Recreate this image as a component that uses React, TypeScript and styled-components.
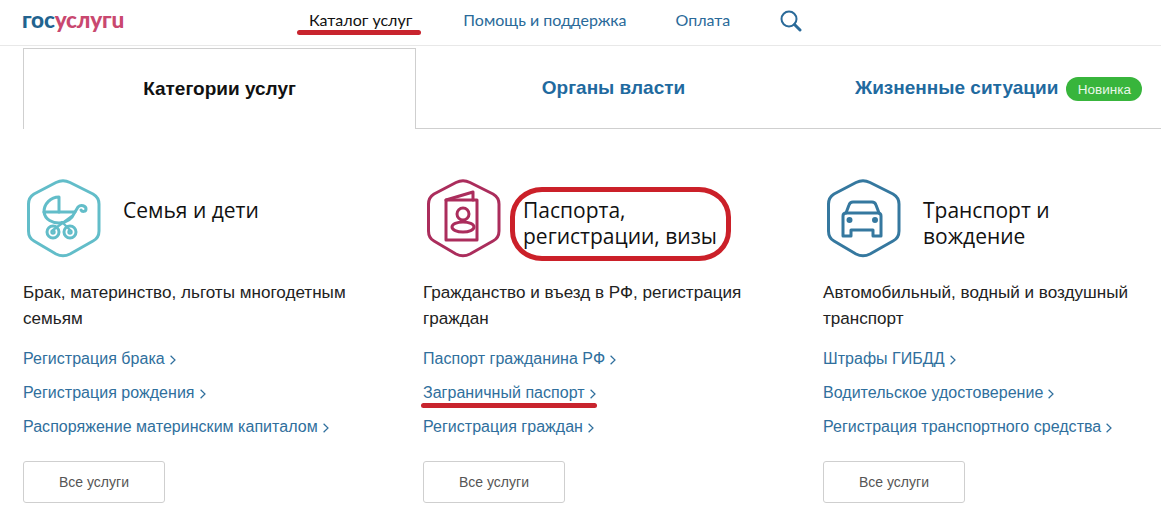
import React from 'react';
import styled, { createGlobalStyle } from 'styled-components';

const GlobalStyle = createGlobalStyle`
  html, body {
    margin: 0;
    padding: 0;
    background: #fff;
  }
  body {
    font-family: "Liberation Sans", Arial, sans-serif;
  }
`;

const Page = styled.div`
  width: 1161px;
  height: 514px;
  overflow: hidden;
  background: #fff;
`;

const Header = styled.header`
  display: flex;
  align-items: center;
  height: 45px;
  padding-left: 22px;
  border-bottom: 1px solid #e8e8e8;
`;

const Logo = styled.div`
  width: 287px;
  font-family: "Lato", sans-serif;
  font-size: 22.6px;
  font-weight: 900;
  letter-spacing: -0.2px;
  line-height: 24px;
  color: #c9486f;
  margin-top: -5px;

  span {
    color: #22638f;
  }
`;

const Nav = styled.nav`
  display: flex;
  align-items: center;
  margin-top: -6px;
`;

const NavLink = styled.a<{ $active?: boolean; $gap: number }>`
  position: relative;
  margin-right: ${(p) => p.$gap}px;
  font-family: "Lato", sans-serif;
  font-size: 16px;
  line-height: 20px;
  color: ${(p) => (p.$active ? '#111' : '#2a6a99')};
  white-space: nowrap;
`;

const RedStroke = styled.i<{ $left: number; $right: number; $bottom: number }>`
  position: absolute;
  left: ${(p) => p.$left}px;
  right: ${(p) => p.$right}px;
  bottom: ${(p) => p.$bottom}px;
  height: 5px;
  border-radius: 3px;
  background: #c8242e;
`;

const SearchIcon = styled.svg`
  display: block;
  width: 22px;
  height: 22px;
  margin-top: 2px;
`;

const Tabs = styled.div`
  display: flex;
  height: 81px;
  margin: 2px 0 0 23px;
`;

const Tab = styled.div<{ $active?: boolean; $width: number; $indent?: number }>`
  display: flex;
  align-items: center;
  justify-content: ${(p) => (p.$indent ? 'flex-start' : 'center')};
  gap: 8px;
  box-sizing: border-box;
  width: ${(p) => p.$width}px;
  height: 81px;
  padding-left: ${(p) => p.$indent ?? 0}px;
  font-family: "Liberation Sans", sans-serif;
  font-size: 19px;
  font-weight: 700;
  white-space: nowrap;
  color: ${(p) => (p.$active ? '#111' : '#1f6a9f')};
  background: #fff;
  border-bottom: 1px solid #cfcfcf;
  ${(p) => p.$active && 'border: 1px solid #cfcfcf; border-bottom: 0;'}
`;

const Badge = styled.span`
  display: inline-flex;
  align-items: center;
  justify-content: center;
  width: 76px;
  height: 24px;
  margin-top: 2px;
  border-radius: 12px;
  background: #38b53c;
  color: #e8f7e8;
  font-size: 13.5px;
  font-weight: 400;
`;

const Columns = styled.main`
  display: grid;
  grid-template-columns: repeat(3, 400px);
  padding: 50px 0 0 23px;
`;

const Column = styled.section`
  display: flex;
  flex-direction: column;
  align-items: flex-start;
`;

const CardHead = styled.div`
  display: flex;
  height: 101px;
  padding-left: 3px;
`;

const HexIcon = styled.svg`
  display: block;
  flex: none;
  width: 76px;
  height: 80px;
`;

const CardTitle = styled.h3`
  position: relative;
  margin: 18px 0 0 21px;
  font-family: "Open Sans", sans-serif;
  font-size: 21px;
  font-weight: 400;
  line-height: 26px;
  white-space: nowrap;
  color: #111;
  align-self: flex-start;
`;

const Ring = styled.i`
  position: absolute;
  left: -13px;
  top: -10px;
  width: 221px;
  height: 74px;
  box-sizing: border-box;
  border: 5px solid #cb2029;
  border-radius: 32px / 30px;
`;

const Description = styled.p`
  width: 340px;
  margin: 0 0 10px;
  font-size: 17.1px;
  line-height: 26px;
  color: #222;
`;

const ServiceLinks = styled.div`
  display: flex;
  flex-direction: column;
`;

const ServiceLink = styled.a`
  position: relative;
  display: inline-flex;
  align-items: center;
  gap: 5px;
  align-self: flex-start;
  font-size: 16px;
  letter-spacing: 0.03px;
  line-height: 34px;
  color: #2f6f9d;
  white-space: nowrap;
`;

const Chevron = styled.svg`
  display: block;
  width: 6px;
  height: 10px;
  margin-top: 2px;
`;

const AllButton = styled.button`
  width: 142px;
  height: 42px;
  margin-top: 17px;
  padding: 0;
  border: 1px solid #cfcfcf;
  border-radius: 3px;
  background: #fff;
  font-family: "Liberation Sans", sans-serif;
  font-size: 14px;
  color: #555;
`;

const Hexagon = () => (
  <path d="M30 3.5 Q37 0 44 3.5 L67 15 Q73 18.5 73 25 L73 52 Q73 59 67 62 L44 75 Q37 78.5 30 75 L8 62 Q2.5 59 2.5 52 L2.5 25 Q2.5 18.5 8 15 Z" />
);

const StrollerIcon = () => (
  <HexIcon viewBox="0 0 76 80" fill="none" stroke="#62bdc9" strokeWidth="3" strokeLinejoin="round" strokeLinecap="round">
    <Hexagon />
    <path d="M18 33 A15 15 0 0 1 33 18 L33 33" />
    <path d="M18 33 C19 41 27 44 33 44 C40 44 46 40 49 33 Z" />
    <path d="M49 33 L52 28 C55 25 60 27 60 30 C60 33 56 33 55 31" />
    <path d="M46 37 L27 51" strokeWidth="2.4" />
    <path d="M36 43 L44 51" strokeWidth="2.4" />
    <circle cx="27" cy="53" r="6" />
    <circle cx="44" cy="53" r="6" />
    <circle cx="27" cy="53" r="1.2" />
    <circle cx="44" cy="53" r="1.2" />
  </HexIcon>
);

const PassportIcon = () => (
  <HexIcon viewBox="0 0 76 80" fill="none" stroke="#ab2d5c" strokeWidth="3" strokeLinejoin="round" strokeLinecap="round">
    <Hexagon />
    <path d="M20 21 L51 21 L51 61 L20 61 Z" />
    <path d="M20 21 L47 13 L47 21" />
    <circle cx="37" cy="35" r="6" />
    <ellipse cx="37" cy="48" rx="11" ry="5" />
  </HexIcon>
);

const CarIcon = () => (
  <HexIcon viewBox="0 0 76 80" fill="none" stroke="#35789f" strokeWidth="3" strokeLinejoin="round" strokeLinecap="round">
    <Hexagon />
    <path d="M20 34 L23 26 Q24 23 27 23 L46 23 Q49 23 50 26 L53 34" />
    <path d="M17 37 Q17 34 20 34 L52 34 Q55 34 55 37 L55 57 L47 57 L47 51 L25 51 L25 57 L17 57 Z" />
    <circle cx="23.5" cy="41" r="1.5" fill="#35789f" />
    <circle cx="49" cy="41" r="1.5" fill="#35789f" />
  </HexIcon>
);

const ChevronIcon = () => (
  <Chevron viewBox="0 0 6 10" fill="none" stroke="#2f6f9d" strokeWidth="1.2">
    <path d="M0.6 0.8 L5 5 L0.6 9.2" />
  </Chevron>
);

const categories = [
  {
    icon: <StrollerIcon />,
    title: <>Семья и дети</>,
    description: 'Брак, материнство, льготы многодетным семьям',
    links: ['Регистрация брака', 'Регистрация рождения', 'Распоряжение материнским капиталом'],
  },
  {
    icon: <PassportIcon />,
    title: (
      <>
        Паспорта,
        <br />
        регистрации, визы
      </>
    ),
    description: 'Гражданство и въезд в РФ, регистрация граждан',
    links: ['Паспорт гражданина РФ', 'Заграничный паспорт', 'Регистрация граждан'],
    ringed: true,
    marked: 'Заграничный паспорт',
  },
  {
    icon: <CarIcon />,
    title: (
      <>
        Транспорт и
        <br />
        вождение
      </>
    ),
    description: 'Автомобильный, водный и воздушный транспорт',
    links: ['Штрафы ГИБДД', 'Водительское удостоверение', 'Регистрация транспортного средства'],
  },
];

const App: React.FC = () => {
  return (
    <Page>
      <GlobalStyle />
      <Header>
        <Logo>
          <span>гос</span>услугu
        </Logo>
        <Nav>
          <NavLink $active $gap={51}>
            Каталог услуг
            <RedStroke $left={-12} $right={-9} $bottom={-5} />
          </NavLink>
          <NavLink $gap={49}>Помощь и поддержка</NavLink>
          <NavLink $gap={50}>Оплата</NavLink>
          <SearchIcon viewBox="0 0 22 22" fill="none" stroke="#2a6a99">
            <circle cx="9" cy="9" r="7.5" strokeWidth="2" />
            <path d="M14.5 14.5 L20 20" strokeWidth="3" strokeLinecap="round" />
          </SearchIcon>
        </Nav>
      </Header>

      <Tabs>
        <Tab $active $width={393}>Категории услуг</Tab>
        <Tab $width={395}>Органы власти</Tab>
        <Tab $width={350} $indent={44}>
          Жизненные ситуации
          <Badge>Новинка</Badge>
        </Tab>
      </Tabs>

      <Columns>
        {categories.map((cat) => (
          <Column key={cat.description}>
            <CardHead>
              {cat.icon}
              <CardTitle>
                {cat.title}
                {cat.ringed && <Ring />}
              </CardTitle>
            </CardHead>
            <Description>{cat.description}</Description>
            <ServiceLinks>
              {cat.links.map((link) => (
                <ServiceLink key={link}>
                  {link}
                  <ChevronIcon />
                  {link === cat.marked && <RedStroke $left={-2} $right={-1} $bottom={2} />}
                </ServiceLink>
              ))}
            </ServiceLinks>
            <AllButton>Все услуги</AllButton>
          </Column>
        ))}
      </Columns>
    </Page>
  );
};

export default App;
